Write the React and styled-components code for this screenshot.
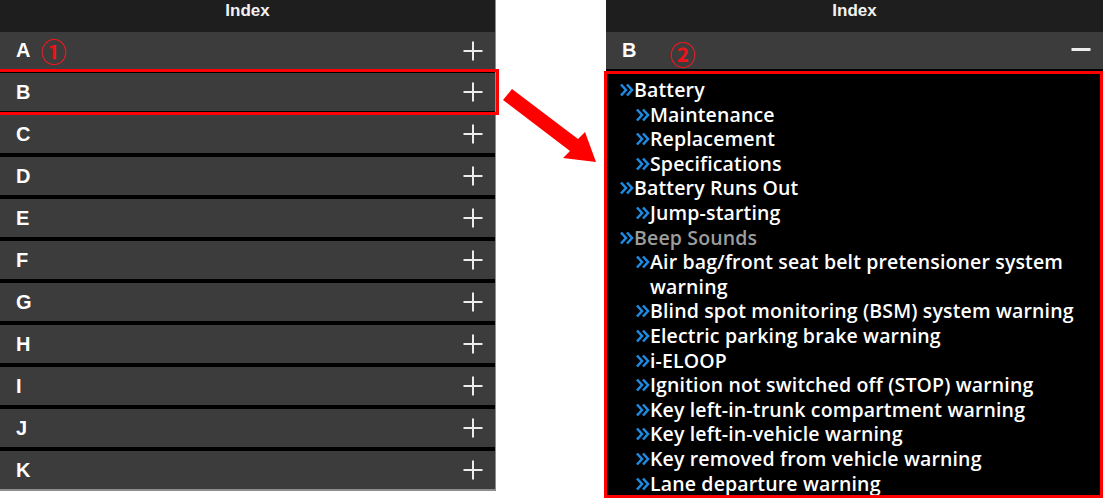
import React from "react";
import styled, { createGlobalStyle } from "styled-components";

const GlobalStyle = createGlobalStyle`
  html, body { margin: 0; padding: 0; background: #fff; }
  body { font-family: "Liberation Sans", Arial, sans-serif; }
`;

const Page = styled.div`
  position: relative;
  width: 1103px;
  height: 500px;
  display: flex;
  justify-content: space-between;
  overflow: hidden;
`;

const Panel = styled.div`
  width: ${(p) => p.width}px;
  display: flex;
  flex-direction: column;
  align-self: flex-start;
  background: #000;
  border-right: ${(p) => (p.edge ? "1px solid #8d8d8d" : "none")};
  border-bottom: ${(p) => (p.edge ? "2px solid #8d8d8d" : "none")};
`;

const Header = styled.div`
  height: 32px;
  background: #1e1e1e;
  color: #f2f2f2;
  font-weight: bold;
  font-size: 17px;
  display: flex;
  align-items: flex-start;
  justify-content: center;
  line-height: 21px;
`;

const Row = styled.div`
  height: ${(p) => (p.first ? 37 : 38)}px;
  margin-top: ${(p) => (p.first ? 0 : 4)}px;
  background: #3c3c3c;
  display: flex;
  align-items: center;
  padding: 0 12px 0 16px;
  color: #fff;
  font-weight: bold;
  font-size: 20px;
  outline: ${(p) => (p.marked ? "3px solid #f00" : "none")};
  outline-offset: 1px;
`;

const Letter = styled.span`
  flex: 1;
  display: flex;
  align-items: center;
`;

const Circled = styled.span`
  color: #e8141b;
  font-family: "Noto Sans CJK JP", "DejaVu Sans", sans-serif;
  font-weight: 700;
  font-size: 26px;
  line-height: 26px;
  margin-left: ${(p) => p.gap}px;
  position: relative;
  top: ${(p) => p.drop}px;
`;

const Toggle = styled.svg`
  width: 20px;
  height: 20px;
`;

const Content = styled.div`
  box-sizing: border-box;
  margin-top: 2px;
  height: 427px;
  overflow: hidden;
  border: 3px solid #f00;
  background: #000;
  padding: 4px 10px 0 12px;
  margin-left: -2px;
`;

const Item = styled.div`
  display: flex;
  align-items: flex-start;
  padding-left: ${(p) => p.level * 16}px;
  font-family: "Open Sans", sans-serif;
  font-weight: 600;
  font-size: 19.5px;
  letter-spacing: 0.15px;
  line-height: 24.6px;
  color: ${(p) => (p.dim ? "#9d9d9d" : "#fff")};
`;

const Chevrons = styled.svg`
  flex: none;
  width: 15px;
  height: 24px;
`;

const Arrow = styled.svg`
  position: absolute;
  left: 495px;
  top: 80px;
`;

const Plus = () => (
  <Toggle viewBox="0 0 20 20">
    <path d="M10 0.5V19.5M0.5 10H19.5" stroke="#ececec" strokeWidth="2" />
  </Toggle>
);

const Minus = () => (
  <Toggle viewBox="0 0 20 20">
    <path d="M0.5 8.5H19.5" stroke="#ececec" strokeWidth="3" />
  </Toggle>
);

const Bullet = () => (
  <Chevrons viewBox="0 0 15 24">
    <path d="M2 6.5L7 12L2 17.5M8 6.5L13 12L8 17.5" fill="none" stroke="#1f8ae0" strokeWidth="2.6" />
  </Chevrons>
);

const letters = ["A", "B", "C", "D", "E", "F", "G", "H", "I", "J", "K"];

const entries = [
  { text: "Battery", level: 0 },
  { text: "Maintenance", level: 1 },
  { text: "Replacement", level: 1 },
  { text: "Specifications", level: 1 },
  { text: "Battery Runs Out", level: 0 },
  { text: "Jump-starting", level: 1 },
  { text: "Beep Sounds", level: 0, dim: true },
  { text: "Air bag/front seat belt pretensioner system warning", level: 1 },
  { text: "Blind spot monitoring (BSM) system warning", level: 1 },
  { text: "Electric parking brake warning", level: 1 },
  { text: "i-ELOOP", level: 1 },
  { text: "Ignition not switched off (STOP) warning", level: 1 },
  { text: "Key left-in-trunk compartment warning", level: 1 },
  { text: "Key left-in-vehicle warning", level: 1 },
  { text: "Key removed from vehicle warning", level: 1 },
  { text: "Lane departure warning", level: 1 },
];

export default function App() {
  return (
    <>
      <GlobalStyle />
      <Page>
        <Panel width={495} edge>
          <Header>Index</Header>
          {letters.map((l, i) => (
            <Row key={l} first={i === 0} marked={l === "B"}>
              <Letter>
                {l}
                {l === "A" && <Circled gap={10} drop={0}>①</Circled>}
              </Letter>
              <Plus />
            </Row>
          ))}
        </Panel>

        <Panel width={497}>
          <Header>Index</Header>
          <Row first>
            <Letter>
              B
              <Circled gap={33} drop={3}>②</Circled>
            </Letter>
            <Minus />
          </Row>
          <Content>
            {entries.map((e) => (
              <Item key={e.text} level={e.level} dim={e.dim}>
                <Bullet />
                <span>{e.text}</span>
              </Item>
            ))}
          </Content>
        </Panel>

        <Arrow width="110" height="90" viewBox="495 80 110 90">
          <polygon
            points="512,89 578,139 585,132 596,162 563,158 570,151 503,100"
            fill="#f00"
          />
        </Arrow>
      </Page>
    </>
  );
}
